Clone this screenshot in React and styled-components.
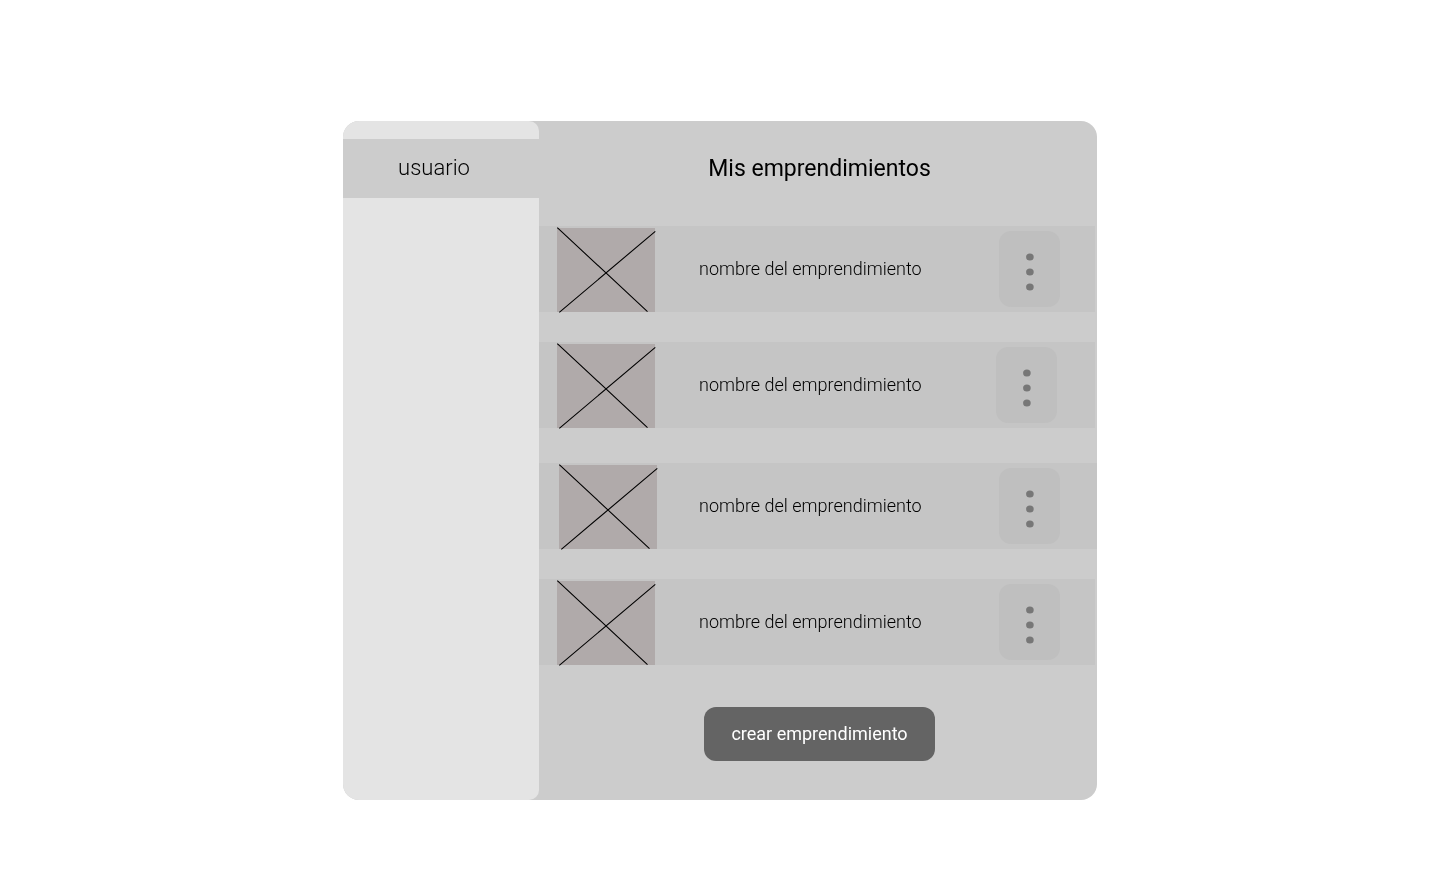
import React from "react";
import styled, { createGlobalStyle } from "styled-components";

const GlobalStyle = createGlobalStyle`
  *, *::before, *::after { box-sizing: border-box; }
  body {
    margin: 0;
    background: #fff;
    color: #000;
    font-family: Roboto, "Liberation Sans", sans-serif;
  }
`;

const Page = styled.div`
  display: flex;
  justify-content: center;
  padding: 121px 24px 93px;
`;

const Card = styled.div`
  display: flex;
  width: 100%;
  max-width: 754px;
  background: #ccc;
  border-radius: 16px;
  overflow: hidden;
  will-change: transform;
`;

const Sidebar = styled.aside`
  flex: 0 0 26%;
  padding-top: 18px;
  background: #e4e4e4;
  border-radius: 0 10px 10px 0;
`;

const UserLink = styled.a`
  display: block;
  padding: 15px 14px 16px 0;
  background: #ccc;
  color: inherit;
  font-size: 22px;
  font-weight: 300;
  line-height: 28px;
  text-align: center;
  text-decoration: none;
`;

const Content = styled.main`
  flex: 1;
  display: flex;
  flex-direction: column;
  align-items: center;
  padding: 33px 0 39px;
`;

const Title = styled.h1`
  margin: 0 0 42px 3px;
  font-size: 23px;
  font-weight: 400;
  line-height: 30px;
`;

const List = styled.ul`
  align-self: stretch;
  margin: 0 0 42px;
  padding: 0;
  list-style: none;
`;

const Row = styled.li`
  display: grid;
  grid-template-columns: 160px 1fr auto;
  align-items: center;
  height: 86px;
  margin-top: ${(p) => p.$gap}px;
  margin-right: ${(p) => (p.$wide ? 0 : 2)}px;
  padding-right: ${(p) => p.$end}px;
  background: #c5c5c5;
`;

const Thumb = styled.svg`
  align-self: end;
  display: block;
  width: 98px;
  height: 84px;
  margin-left: ${(p) => p.$start}px;
  background: #b0aaaa;
  overflow: visible;
`;

const Name = styled.span`
  font-size: 18px;
  font-weight: 300;
  line-height: 24px;
  white-space: nowrap;
`;

const MenuButton = styled.button`
  display: grid;
  place-items: center;
  width: 61px;
  height: 76px;
  padding: 6px 0 0;
  border: 0;
  border-radius: 12px;
  background: #bfbfbf;
  cursor: pointer;
`;

const CreateButton = styled.button`
  margin-left: 3px;
  padding: 15px 27px;
  border: 0;
  border-radius: 12px;
  background: #646464;
  color: #fff;
  font: 400 18px/24px Roboto, "Liberation Sans", sans-serif;
  cursor: pointer;
`;

const ventures = [
  { id: 1, name: "nombre del emprendimiento", start: 18, end: 35, gap: 0 },
  { id: 2, name: "nombre del emprendimiento", start: 18, end: 38, gap: 30 },
  { id: 3, name: "nombre del emprendimiento", start: 20, end: 37, gap: 35, wide: true },
  { id: 4, name: "nombre del emprendimiento", start: 18, end: 35, gap: 30 },
];

function Placeholder({ start }) {
  return (
    <Thumb $start={start} viewBox="0 0 98 84" aria-hidden="true">
      <path d="M0.3 -0.4L90.5 83.6M2.3 84.4L98.3 3.4" stroke="#000" strokeWidth="1.1" fill="none" />
    </Thumb>
  );
}

function Dots() {
  return (
    <svg width="9" height="38" viewBox="0 0 9 38" fill="#777" aria-hidden="true">
      <ellipse cx="4.9" cy="4" rx="3.8" ry="3.5" />
      <ellipse cx="4.9" cy="19" rx="3.8" ry="3.5" />
      <ellipse cx="4.9" cy="34" rx="3.8" ry="3.5" />
    </svg>
  );
}

export default function App() {
  return (
    <>
      <GlobalStyle />
      <Page>
        <Card>
          <Sidebar>
            <UserLink href="#usuario">usuario</UserLink>
          </Sidebar>
          <Content>
            <Title>Mis emprendimientos</Title>
            <List>
              {ventures.map((v) => (
                <Row key={v.id} $gap={v.gap} $end={v.end} $wide={v.wide}>
                  <Placeholder start={v.start} />
                  <Name>{v.name}</Name>
                  <MenuButton type="button" aria-label="Opciones">
                    <Dots />
                  </MenuButton>
                </Row>
              ))}
            </List>
            <CreateButton type="button">crear emprendimiento</CreateButton>
          </Content>
        </Card>
      </Page>
    </>
  );
}
